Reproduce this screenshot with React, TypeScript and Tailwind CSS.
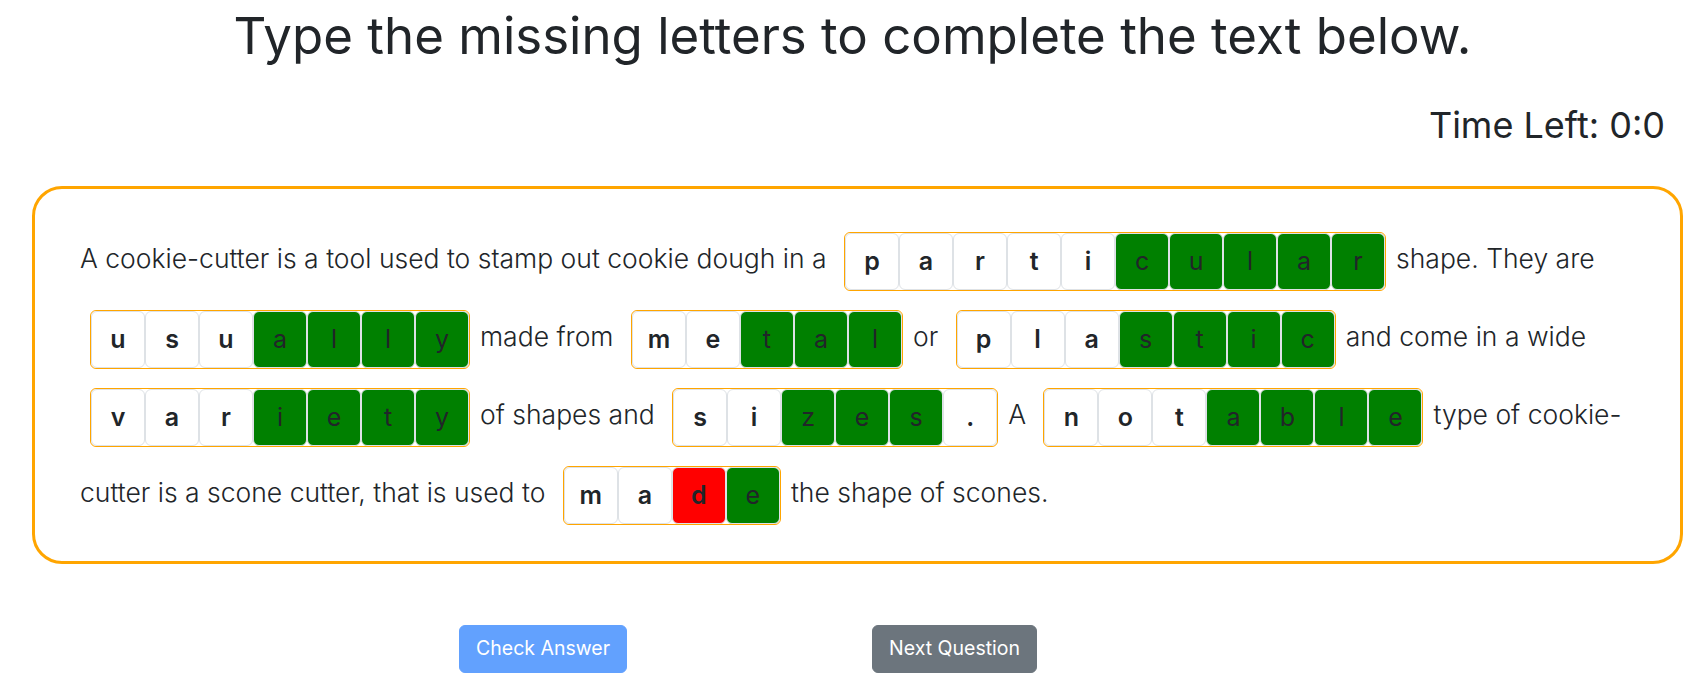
import React from "react"

type Cell = { ch: string; state: "given" | "right" | "wrong" }

const word = (given: string, typed: string, wrong: number[] = []): Cell[] => [
  ...given.split("").map((ch) => ({ ch, state: "given" as const })),
  ...typed.split("").map((ch, i) => ({ ch, state: wrong.includes(i) ? ("wrong" as const) : ("right" as const) })),
]

function Blank({ cells }: { cells: Cell[] }) {
  return (
    <span className="mx-[10px] inline-flex align-middle rounded-[6px] border border-[#ffa500] leading-none">
      {cells.map((c, i) => (
        <span
          key={i}
          className={`flex h-[57px] w-[54px] items-center justify-center rounded-[6px] border border-[#dee2e6] text-[25px] text-[#212529] ${
            c.state === "given" ? "bg-white font-semibold" : c.state === "wrong" ? "bg-[#ff0000] font-semibold" : "bg-[#008000] font-normal"
          }`}
        >
          {c.ch}
        </span>
      ))}
    </span>
  )
}

export default function App() {
  return (
    <div className="min-h-[697px] bg-white text-[#212529]" style={{ fontFamily: "Inter, 'Liberation Sans', sans-serif" }}>
      <h1 className="pt-[5px] text-center text-[51px] font-normal leading-[1.2]">Type the missing letters to complete the text below.</h1>
      <div className="mt-[38px] pr-[40px] text-right text-[36px] font-normal leading-[1.2]">Time Left: 0:0</div>
      <div className="mt-[39px] ml-[32px] mr-[22px] rounded-[30px] border-[3px] border-[#ffa500] px-[45px] py-[30px] text-[26.5px] font-light leading-[78px]">
        A cookie-cutter is a tool used to stamp out cookie dough in a <Blank cells={word("parti", "cular")} />
        shape. They are <Blank cells={word("usu", "ally")} />
        made from <Blank cells={word("me", "tal")} />
        or <Blank cells={word("pla", "stic")} />
        and come in a wide <Blank cells={word("var", "iety")} />
        of shapes and{" "}
        <Blank
          cells={[
            { ch: "s", state: "given" },
            { ch: "i", state: "given" },
            { ch: "z", state: "right" },
            { ch: "e", state: "right" },
            { ch: "s", state: "right" },
            { ch: ".", state: "given" },
          ]}
        />
        A <Blank cells={word("not", "able")} />
        type of cookie-cutter is a scone cutter, that is used to <Blank cells={word("ma", "de", [0])} />
        the shape of scones.
      </div>
      <div className="mt-[61px] flex gap-[245px] pl-[459px]">
        <button type="button" className="rounded-[6px] border border-[#62a1fe] bg-[#62a1fe] px-4 py-2 text-[19.5px] leading-[1.5] text-white">
          Check Answer
        </button>
        <button type="button" className="rounded-[6px] border border-[#6c757d] bg-[#6c757d] px-4 py-2 text-[19.5px] leading-[1.5] text-white">
          Next Question
        </button>
      </div>
    </div>
  )
}
